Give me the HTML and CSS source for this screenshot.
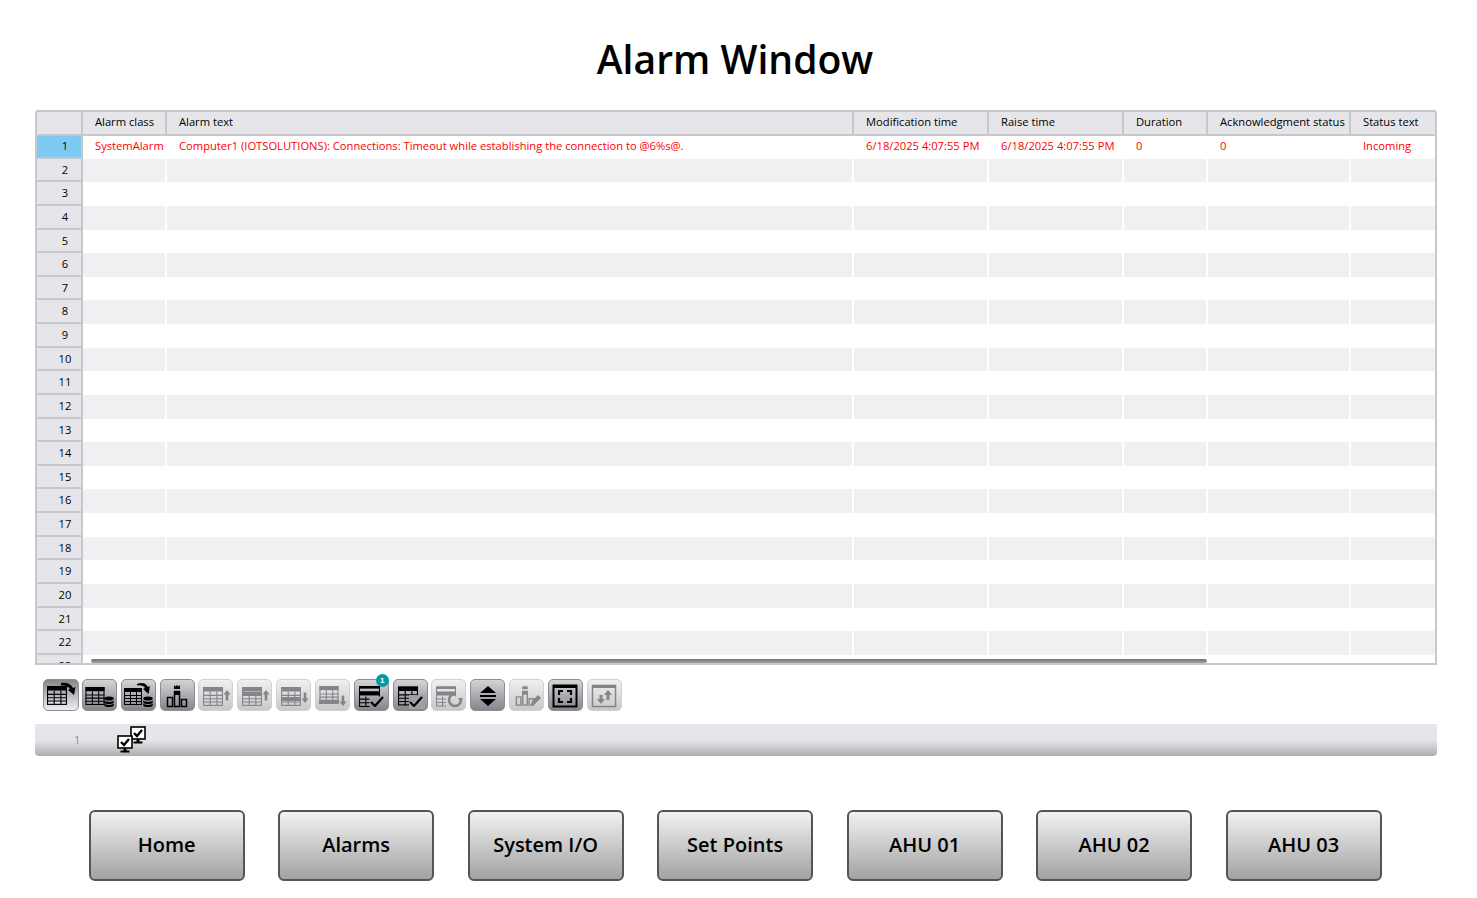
FILE: index.html
```html
<!DOCTYPE html>
<html lang="en">
<head>
<meta charset="utf-8">
<title>Alarm Window</title>
<link rel="stylesheet" href="styles.css">
</head>
<body>
<svg class="defs" width="0" height="0" aria-hidden="true">
  <defs>
    <symbol id="grid" viewBox="0 0 18 17">
      <rect x="0.5" y="0.5" width="17" height="16" fill="none" stroke="currentColor"/>
      <rect x="0" y="0" width="18" height="4" fill="currentColor"/>
      <path d="M0 7.500H18M0 10.500H18M0 13.500H18M6.500 4V17M12.500 4V17" stroke="currentColor" fill="none"/>
    </symbol>
    <symbol id="db" viewBox="0 0 11 12">
      <ellipse cx="5.5" cy="2.2" rx="5.2" ry="2.2" fill="currentColor"/>
      <path d="M.3 4c1 2.400 9.400 2.400 10.400 0v2.500c-1 2.400-9.400 2.400-10.400 0zM.3 7.500c1 2.400 9.400 2.400 10.400 0v2.300c-1 2.400-9.400 2.400-10.400 0z" fill="currentColor"/>
    </symbol>
    <symbol id="bars" viewBox="0 0 22 23">
      <path d="M8 0l1.500 1.500L11 0l1.500 1.500L14 0v4H8z" fill="currentColor"/>
      <path d="M1.500 12.500h5v9h-5zM8.500 6.500h5v15h-5zM15.500 14.500h5v7h-5z" fill="none" stroke="currentColor" stroke-width="1.500"/>
      <rect x="8" y="6" width="6" height="4" fill="currentColor"/>
    </symbol>
    <symbol id="check" viewBox="0 0 14 11">
      <path d="M1 6l4 4 8-9" fill="none" stroke="currentColor" stroke-width="2.200"/>
    </symbol>
    <symbol id="listgrid" viewBox="0 0 20 20">
      <path d="M.5 .5H19.500V10M.5 .5V19.500H10" fill="none" stroke="currentColor"/>
      <rect x="0" y="0" width="20" height="2.500" fill="currentColor"/>
      <rect x="0" y="5" width="20" height="4" fill="currentColor"/>
      <path d="M0 12.500H10M0 16H10M6.500 10V20" stroke="currentColor" fill="none"/>
    </symbol>
    <symbol id="monitor" viewBox="0 0 16 18">
      <rect x="1" y="1" width="14" height="12" fill="#fff" stroke="#000" stroke-width="1.600"/>
      <path d="M4 7l3 3 5-6" fill="none" stroke="#000" stroke-width="2.400"/>
      <path d="M6.500 13h3v2.500h-3zM3.500 15.500h9V17.500h-9z" fill="#000"/>
    </symbol>
  </defs>
</svg>

<main class="page">
  <h1 class="title">Alarm Window</h1>

  <section class="alarm-table">
    <div class="row head">
      <div class="cell num"></div>
      <div class="cell">Alarm class</div>
      <div class="cell">Alarm text</div>
      <div class="cell">Modification time</div>
      <div class="cell">Raise time</div>
      <div class="cell">Duration</div>
      <div class="cell">Acknowledgment status</div>
      <div class="cell">Status text</div>
    </div>
    <div class="body">
      <div class="row alarm">
        <div class="cell num selected">1</div>
        <div class="cell">SystemAlarm</div>
        <div class="cell">Computer1 (IOTSOLUTIONS): Connections: Timeout while establishing the connection to @6%s@.</div>
        <div class="cell">6/18/2025 4:07:55 PM</div>
        <div class="cell">6/18/2025 4:07:55 PM</div>
        <div class="cell">0</div>
        <div class="cell">0</div>
        <div class="cell">Incoming</div>
      </div>
      <div class="row even"><div class="cell num">2</div><div class="cell"></div><div class="cell"></div><div class="cell"></div><div class="cell"></div><div class="cell"></div><div class="cell"></div><div class="cell"></div></div>
      <div class="row"><div class="cell num">3</div><div class="cell"></div><div class="cell"></div><div class="cell"></div><div class="cell"></div><div class="cell"></div><div class="cell"></div><div class="cell"></div></div>
      <div class="row even"><div class="cell num">4</div><div class="cell"></div><div class="cell"></div><div class="cell"></div><div class="cell"></div><div class="cell"></div><div class="cell"></div><div class="cell"></div></div>
      <div class="row"><div class="cell num">5</div><div class="cell"></div><div class="cell"></div><div class="cell"></div><div class="cell"></div><div class="cell"></div><div class="cell"></div><div class="cell"></div></div>
      <div class="row even"><div class="cell num">6</div><div class="cell"></div><div class="cell"></div><div class="cell"></div><div class="cell"></div><div class="cell"></div><div class="cell"></div><div class="cell"></div></div>
      <div class="row"><div class="cell num">7</div><div class="cell"></div><div class="cell"></div><div class="cell"></div><div class="cell"></div><div class="cell"></div><div class="cell"></div><div class="cell"></div></div>
      <div class="row even"><div class="cell num">8</div><div class="cell"></div><div class="cell"></div><div class="cell"></div><div class="cell"></div><div class="cell"></div><div class="cell"></div><div class="cell"></div></div>
      <div class="row"><div class="cell num">9</div><div class="cell"></div><div class="cell"></div><div class="cell"></div><div class="cell"></div><div class="cell"></div><div class="cell"></div><div class="cell"></div></div>
      <div class="row even"><div class="cell num">10</div><div class="cell"></div><div class="cell"></div><div class="cell"></div><div class="cell"></div><div class="cell"></div><div class="cell"></div><div class="cell"></div></div>
      <div class="row"><div class="cell num">11</div><div class="cell"></div><div class="cell"></div><div class="cell"></div><div class="cell"></div><div class="cell"></div><div class="cell"></div><div class="cell"></div></div>
      <div class="row even"><div class="cell num">12</div><div class="cell"></div><div class="cell"></div><div class="cell"></div><div class="cell"></div><div class="cell"></div><div class="cell"></div><div class="cell"></div></div>
      <div class="row"><div class="cell num">13</div><div class="cell"></div><div class="cell"></div><div class="cell"></div><div class="cell"></div><div class="cell"></div><div class="cell"></div><div class="cell"></div></div>
      <div class="row even"><div class="cell num">14</div><div class="cell"></div><div class="cell"></div><div class="cell"></div><div class="cell"></div><div class="cell"></div><div class="cell"></div><div class="cell"></div></div>
      <div class="row"><div class="cell num">15</div><div class="cell"></div><div class="cell"></div><div class="cell"></div><div class="cell"></div><div class="cell"></div><div class="cell"></div><div class="cell"></div></div>
      <div class="row even"><div class="cell num">16</div><div class="cell"></div><div class="cell"></div><div class="cell"></div><div class="cell"></div><div class="cell"></div><div class="cell"></div><div class="cell"></div></div>
      <div class="row"><div class="cell num">17</div><div class="cell"></div><div class="cell"></div><div class="cell"></div><div class="cell"></div><div class="cell"></div><div class="cell"></div><div class="cell"></div></div>
      <div class="row even"><div class="cell num">18</div><div class="cell"></div><div class="cell"></div><div class="cell"></div><div class="cell"></div><div class="cell"></div><div class="cell"></div><div class="cell"></div></div>
      <div class="row"><div class="cell num">19</div><div class="cell"></div><div class="cell"></div><div class="cell"></div><div class="cell"></div><div class="cell"></div><div class="cell"></div><div class="cell"></div></div>
      <div class="row even"><div class="cell num">20</div><div class="cell"></div><div class="cell"></div><div class="cell"></div><div class="cell"></div><div class="cell"></div><div class="cell"></div><div class="cell"></div></div>
      <div class="row"><div class="cell num">21</div><div class="cell"></div><div class="cell"></div><div class="cell"></div><div class="cell"></div><div class="cell"></div><div class="cell"></div><div class="cell"></div></div>
      <div class="row even"><div class="cell num">22</div><div class="cell"></div><div class="cell"></div><div class="cell"></div><div class="cell"></div><div class="cell"></div><div class="cell"></div><div class="cell"></div></div>
      <div class="row"><div class="cell num">23</div><div class="cell"></div><div class="cell"></div><div class="cell"></div><div class="cell"></div><div class="cell"></div><div class="cell"></div><div class="cell"></div></div>
      <div class="scrollbar"></div>
    </div>
  </section>

  <div class="toolbar">
    <button class="tool active"><svg viewBox="0 0 30 26" class="ico">
      <use href="#grid" x="1" y="3" width="20" height="19"/>
      <path d="M15 0c6-1 10 1 12 5l2.500-1-1.500 8-6-5 2-1c-1.500-2.500-5-4-9-3.500z" fill="currentColor"/>
    </svg></button>
    <button class="tool"><svg viewBox="0 0 30 26" class="ico">
      <use href="#grid" x="1" y="4" width="20" height="18"/>
      <use href="#db" x="20" y="13" width="10" height="12"/>
    </svg></button>
    <button class="tool"><svg viewBox="0 0 30 26" class="ico">
      <use href="#grid" x="1" y="5" width="18" height="17"/>
      <use href="#db" x="20" y="13" width="10" height="12"/>
      <path d="M14 1c5-2 9-1 11 3l2-1-1.500 8-5.500-5 2-1c-1-2-4-3-8-2.500z" fill="currentColor"/>
    </svg></button>
    <button class="tool"><svg viewBox="0 0 30 26" class="ico">
      <use href="#bars" x="4" y="2" width="22" height="23"/>
    </svg></button>
    <button class="tool off"><svg viewBox="0 0 30 26" class="ico">
      <use href="#grid" x="2" y="4" width="20" height="19"/>
      <path d="M26 7l3.500 4.500h-2.200v6h-2.600v-6h-2.200z" fill="currentColor"/>
    </svg></button>
    <button class="tool off"><svg viewBox="0 0 30 26" class="ico">
      <use href="#grid" x="2" y="4" width="20" height="19"/>
      <rect x="2" y="9" width="20" height="4" fill="currentColor"/>
      <path d="M26 7l3.500 4.500h-2.200v6h-2.600v-6h-2.200z" fill="currentColor"/>
    </svg></button>
    <button class="tool off"><svg viewBox="0 0 30 26" class="ico">
      <use href="#grid" x="2" y="4" width="20" height="19"/>
      <rect x="2" y="14" width="20" height="4" fill="currentColor"/>
      <path d="M26 20l3.500-4.500h-2.200v-6h-2.600v6h-2.200z" fill="currentColor"/>
    </svg></button>
    <button class="tool off"><svg viewBox="0 0 30 26" class="ico">
      <use href="#grid" x="2" y="3" width="20" height="18"/>
      <rect x="2" y="17" width="20" height="4" fill="currentColor"/>
      <path d="M26 23l3.500-4.500h-2.200v-6h-2.600v6h-2.200z" fill="currentColor"/>
    </svg></button>
    <button class="tool"><svg viewBox="0 0 30 26" class="ico">
      <use href="#listgrid" x="3" y="3" width="21" height="21"/>
      <use href="#check" x="14" y="13" width="14" height="11"/>
    </svg><span class="badge">1</span></button>
    <button class="tool"><svg viewBox="0 0 30 26" class="ico">
      <use href="#grid" x="3" y="3" width="20" height="20"/>
      <rect x="14" y="12" width="16" height="14" fill="#a0a0a5"/>
      <use href="#check" x="14" y="13" width="14" height="11"/>
    </svg></button>
    <button class="tool off"><svg viewBox="0 0 30 26" class="ico">
      <use href="#listgrid" x="2" y="3" width="20" height="21"/>
      <circle cx="21" cy="17" r="6" fill="none" stroke="currentColor" stroke-width="2.500" stroke-dasharray="28 8"/>
      <path d="M24 15l5 0-2 5z" fill="currentColor"/>
    </svg></button>
    <button class="tool"><svg viewBox="0 0 30 26" class="ico">
      <path d="M15 3l8 7H7zM15 23l8-7H7z" fill="currentColor"/>
      <rect x="7" y="12" width="16" height="2" fill="currentColor"/>
    </svg></button>
    <button class="tool off"><svg viewBox="0 0 30 26" class="ico">
      <use href="#bars" x="3" y="2" width="20" height="22"/>
      <path d="M19 22l1-4 6-6 3 3-6 6z" fill="currentColor"/>
    </svg></button>
    <button class="tool"><svg viewBox="0 0 30 26" class="ico">
      <rect x="3.500" y="2.500" width="23" height="21" fill="none" stroke="currentColor" stroke-width="2"/>
      <rect x="3" y="2" width="24" height="3" fill="currentColor"/>
      <path d="M9 12V8h4M17 8h4v4M21 15v4h-4M13 19H9v-4" fill="none" stroke="currentColor" stroke-width="2.200"/>
    </svg></button>
    <button class="tool off"><svg viewBox="0 0 30 26" class="ico">
      <rect x="3.500" y="2.500" width="23" height="21" fill="none" stroke="currentColor" stroke-width="1.500"/>
      <rect x="3" y="2" width="24" height="3" fill="currentColor"/>
      <path d="M19 7l4 5h-2.500v5h-3v-5H15zM12 21l-4-5h2.500v-4h3v4H16z" fill="currentColor"/>
    </svg></button>
  </div>

  <div class="statusbar">
    <span class="status-num">1</span>
    <svg class="status-ico" viewBox="0 0 30 28">
      <use href="#monitor" x="13" y="0" width="16" height="18"/>
      <use href="#monitor" x="0" y="9" width="16" height="18"/>
    </svg>
  </div>

  <nav class="nav">
    <button class="nav-btn">Home</button>
    <button class="nav-btn">Alarms</button>
    <button class="nav-btn">System I/O</button>
    <button class="nav-btn">Set Points</button>
    <button class="nav-btn">AHU 01</button>
    <button class="nav-btn">AHU 02</button>
    <button class="nav-btn">AHU 03</button>
  </nav>
</main>
</body>
</html>
```

FILE: styles.css
```css
* { box-sizing: border-box; }
html, body { margin: 0; padding: 0; background: #fff; }
body { font-family: "Open Sans", "Noto Sans", sans-serif; overflow: hidden; height: 898px; }
.defs { position: absolute; }
.page { width: 1477px; height: 898px; padding: 0 40px 0 35px; }
.title {
  margin: 0;
  height: 110px;
  padding: 32px 2px 0 0;
  text-align: center;
  font-size: 39.1px;
  line-height: 54px;
  font-weight: 600;
  color: #000;
}
.alarm-table {
  width: 1402px;
  height: 555px;
  border: 2px solid #c8c8cc;
  border-radius: 3px 3px 0 0;
  overflow: hidden;
  background: #fff;
  font-size: 11.2px;
}
.row {
  display: grid;
  grid-template-columns: 46px 82px 687px 135px 135px 84px 143px 86px;
  height: 23.64px;
  color: #000;
}
.cell {
  padding-left: 12px;
  line-height: 21px;
  white-space: nowrap;
  overflow: hidden;
  border-left: 2px solid #fff;
}
.cell:first-child { border-left: 0; }
.cell:nth-child(2) { border-left: 0; }
.num {
  text-align: center;
  padding: 0 0 0 12px;
  background: #e6e6ea;
  border-right: 2px solid #c8c8cc;
  border-bottom: 2px solid #c8c8cc;
  color: #000;
}
.selected { background: #7dcbf5; }
.head { height: 24px; background: #e6e6ea; border-bottom: 2px solid #c8c8cc; }
.head .cell { border-left: 2px solid #c8c8cc; line-height: 19px; }
.head .cell:nth-child(2) { border-left: 0; }
.head .num { border-bottom: 0; border-left: 0; }
.body { position: relative; height: 529px; overflow: hidden; }
.alarm { color: #ff0000; height: 22.64px; }
.alarm .cell { line-height: 20px; }
.alarm .num { color: #000; }
.even .cell { background: #f0f0f3; }
.even .num { background: #e6e6ea; }
.scrollbar {
  position: absolute;
  left: 54px;
  bottom: 2px;
  width: 1116px;
  height: 4px;
  background: linear-gradient(#6f6f76, #a0a0a6);
  border-radius: 2px;
}
.toolbar {
  display: flex;
  gap: 3.85px;
  height: 59px;
  padding: 14px 0 0 8px;
}
.tool {
  position: relative;
  width: 35px;
  height: 32px;
  padding: 0;
  border: 1px solid #8c8c92;
  border-radius: 5px;
  background: linear-gradient(#d4d4d8, #85858c);
  color: #000;
}
.tool.active { background: linear-gradient(#85858c, #eeeef4); width: 36px; margin-right: -1px; }
.tool.off {
  background: linear-gradient(#f0f0f0, #c8c8cb);
  border-color: #d0d0d3;
  color: #858589;
}
.ico { display: block; width: 30px; height: 26px; margin: 2px auto 0; overflow: visible; }
.badge {
  position: absolute;
  top: -6px;
  right: -1px;
  width: 13px;
  height: 13px;
  border-radius: 50%;
  background: #009aa0;
  color: #fff;
  font-size: 8px;
  line-height: 13px;
  font-weight: 600;
  text-align: center;
}
.statusbar {
  display: flex;
  align-items: center;
  width: 1402px;
  height: 32px;
  border-radius: 0 0 4px 4px;
  background: linear-gradient(#e6e6ea 0, #e6e6ea 50%, #adadb2 100%);
}
.status-num {
  width: 82px;
  padding: 0 0 2px 39px;
  font-size: 11px;
  color: #8c8c90;
}
.status-ico { width: 30px; height: 28px; }
.nav {
  display: flex;
  justify-content: space-between;
  padding: 54px 0 0 53.6px;
  width: 1346.6px;
}
.nav-btn {
  width: 156px;
  height: 71px;
  border: 2px solid #555;
  border-radius: 6px;
  background: linear-gradient(#f2f2f2, #a2a2a2);
  font-family: inherit;
  font-size: 20px;
  font-weight: 600;
  color: #000;
  padding: 0 0 2px;
}
```
